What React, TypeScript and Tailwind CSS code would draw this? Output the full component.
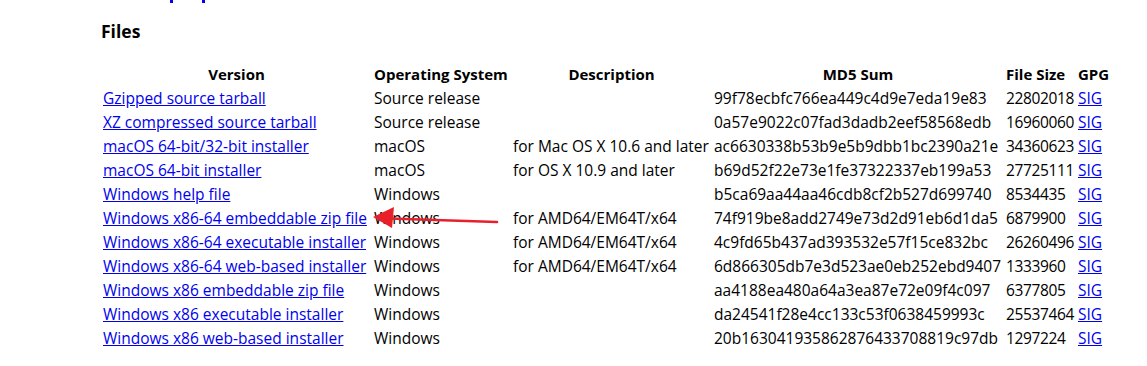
import React from "react";

type Row = { name: string; os: string; desc: string; md5: string; size: string };

const rows: Row[] = [
  { name: "Gzipped source tarball", os: "Source release", desc: "", md5: "99f78ecbfc766ea449c4d9e7eda19e83", size: "22802018" },
  { name: "XZ compressed source tarball", os: "Source release", desc: "", md5: "0a57e9022c07fad3dadb2eef58568edb", size: "16960060" },
  { name: "macOS 64-bit/32-bit installer", os: "macOS", desc: "for Mac OS X 10.6 and later", md5: "ac6630338b53b9e5b9dbb1bc2390a21e", size: "34360623" },
  { name: "macOS 64-bit installer", os: "macOS", desc: "for OS X 10.9 and later", md5: "b69d52f22e73e1fe37322337eb199a53", size: "27725111" },
  { name: "Windows help file", os: "Windows", desc: "", md5: "b5ca69aa44aa46cdb8cf2b527d699740", size: "8534435" },
  { name: "Windows x86-64 embeddable zip file", os: "Windows", desc: "for AMD64/EM64T/x64", md5: "74f919be8add2749e73d2d91eb6d1da5", size: "6879900" },
  { name: "Windows x86-64 executable installer", os: "Windows", desc: "for AMD64/EM64T/x64", md5: "4c9fd65b437ad393532e57f15ce832bc", size: "26260496" },
  { name: "Windows x86-64 web-based installer", os: "Windows", desc: "for AMD64/EM64T/x64", md5: "6d866305db7e3d523ae0eb252ebd9407", size: "1333960" },
  { name: "Windows x86 embeddable zip file", os: "Windows", desc: "", md5: "aa4188ea480a64a3ea87e72e09f4c097", size: "6377805" },
  { name: "Windows x86 executable installer", os: "Windows", desc: "", md5: "da24541f28e4cc133c53f0638459993c", size: "25537464" },
  { name: "Windows x86 web-based installer", os: "Windows", desc: "", md5: "20b163041935862876433708819c97db", size: "1297224" },
];

export default function App() {
  return (
    <div
      className="relative w-[1147px] h-[366px] bg-white text-black overflow-hidden"
      style={{ fontFamily: '"Open Sans", "Noto Sans", sans-serif' }}
    >
      <div className="flex h-[3px] pl-[170px] gap-[29px]">
        <div className="w-[3px] h-[3px] bg-[#0000ee]" />
        <div className="w-[3px] h-[3px] bg-[#0000ee]" />
      </div>
      <div className="pl-[101px] pt-[17px]">
        <h2 className="text-[17.5px] font-bold leading-[22px]">Files</h2>
        <table className="mt-[20px] w-[1006px] table-fixed border-collapse text-[15.5px] leading-[24px]">
          <colgroup>
            <col className="w-[271px]" />
            <col className="w-[139px]" />
            <col className="w-[201px]" />
            <col className="w-[292px]" />
            <col className="w-[72px]" />
            <col className="w-[31px]" />
          </colgroup>
          <thead>
            <tr className="h-[24px] text-[15px]">
              <th className="font-bold text-center px-[2px] whitespace-nowrap">Version</th>
              <th className="font-bold text-left px-[2px] whitespace-nowrap">Operating System</th>
              <th className="font-bold text-center px-[2px] whitespace-nowrap">Description</th>
              <th className="font-bold text-center px-[2px] whitespace-nowrap">MD5 Sum</th>
              <th className="font-bold text-left px-[2px] whitespace-nowrap">File Size</th>
              <th className="font-bold text-left px-[2px] whitespace-nowrap">GPG</th>
            </tr>
          </thead>
          <tbody>
            {rows.map((r) => (
              <tr key={r.name} className="h-[24px]">
                <td className="px-[2px] whitespace-nowrap">
                  <a href="#" className="text-[#0000ee] underline">{r.name}</a>
                </td>
                <td className="px-[2px] whitespace-nowrap">{r.os}</td>
                <td className="px-[2px] whitespace-nowrap">{r.desc}</td>
                <td className="px-[2px] whitespace-nowrap">{r.md5}</td>
                <td className="px-[2px] whitespace-nowrap tracking-[-0.35px]">{r.size}</td>
                <td className="px-[2px] whitespace-nowrap">
                  <a href="#" className="text-[#0000ee] underline">SIG</a>
                </td>
              </tr>
            ))}
          </tbody>
        </table>
      </div>
      <svg
        className="absolute left-0 top-0 pointer-events-none"
        width="1147"
        height="366"
        viewBox="0 0 1147 366"
      >
        <line x1="389" y1="218.5" x2="497" y2="222" stroke="#e8202a" strokeWidth="2.6" strokeLinecap="round" />
        <polygon points="373,217 394,207 392,228" fill="#e8202a" />
      </svg>
    </div>
  );
}
